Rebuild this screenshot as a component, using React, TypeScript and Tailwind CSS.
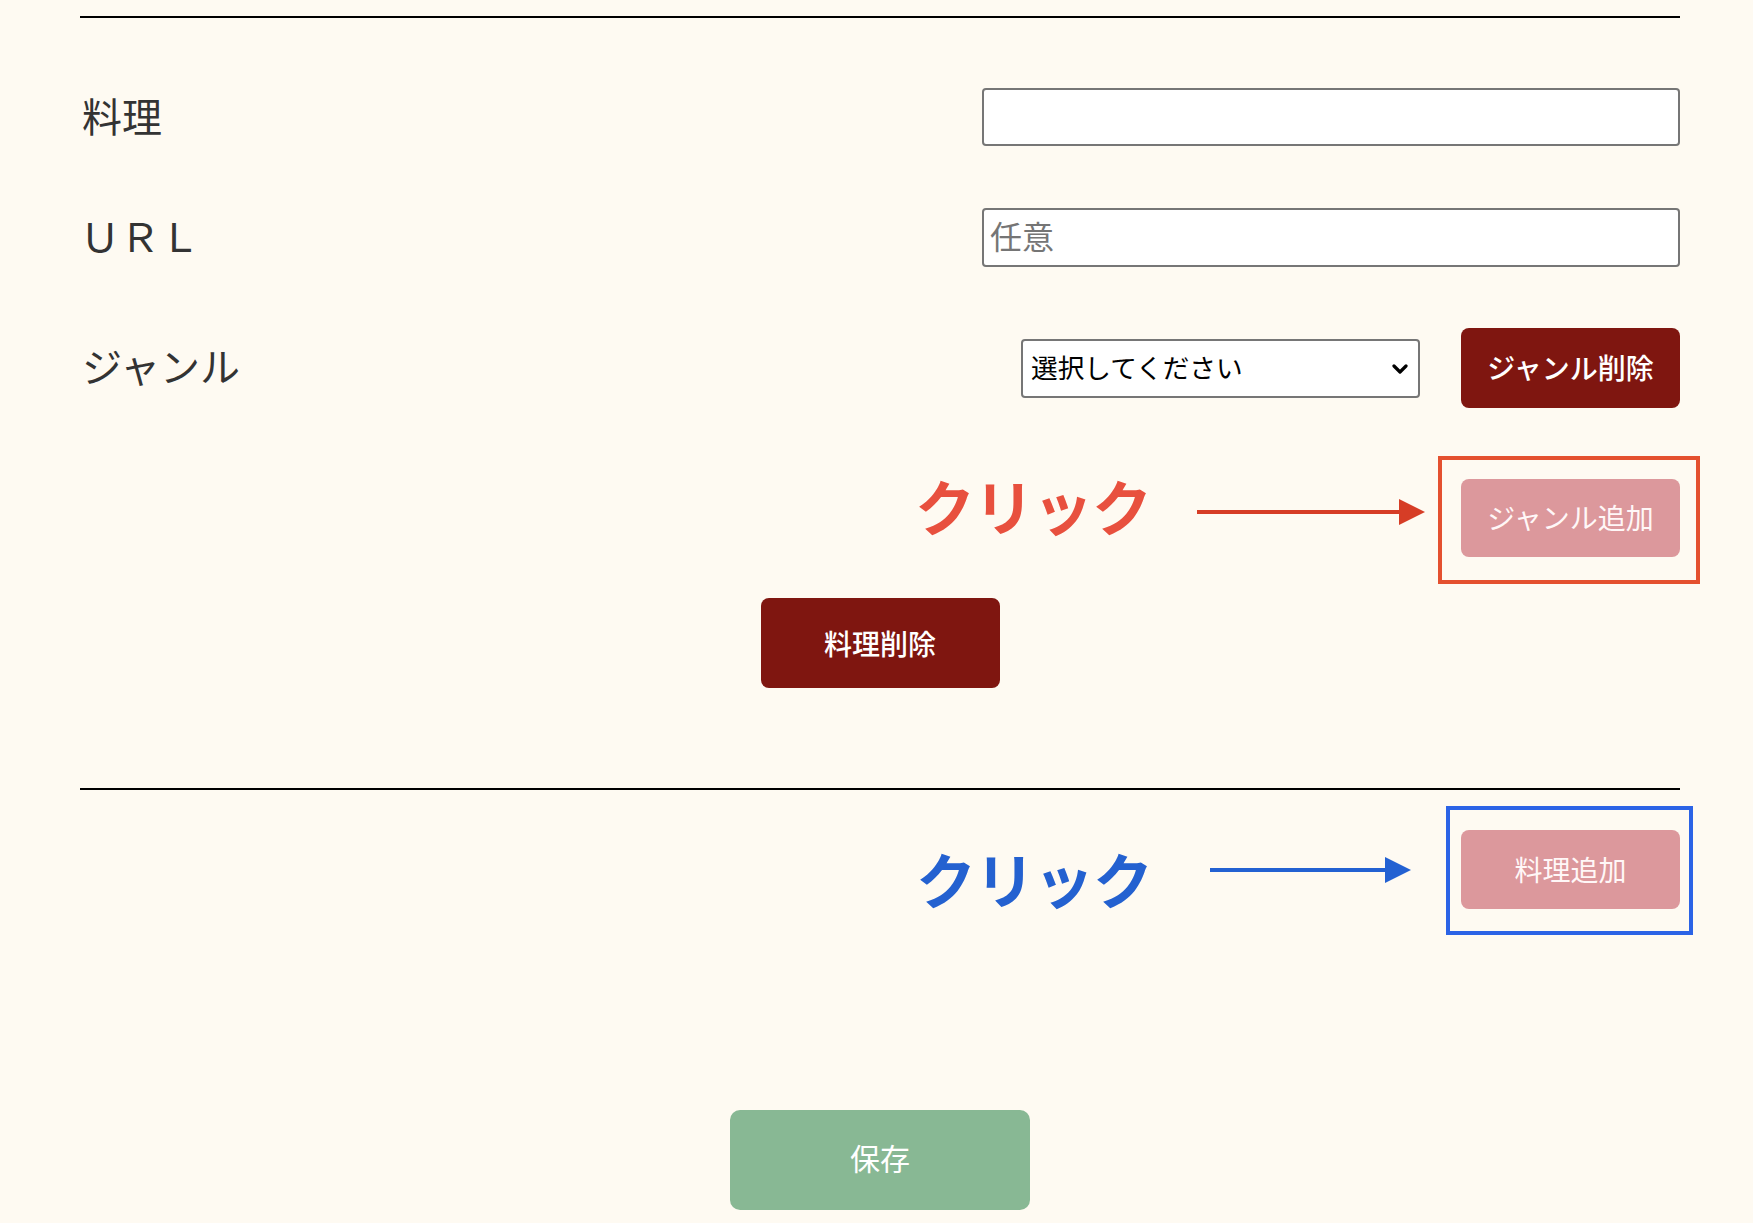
import React from 'react';

const jp = { fontFamily: '"Noto Sans CJK JP", "Noto Sans", sans-serif' };

const Arrow: React.FC<{ color: string; width: number }> = ({ color, width }) => (
    <svg width={width} height={28} viewBox={`0 0 ${width} 28`} className="block">
        <line x1={0} y1={14} x2={width - 24} y2={14} stroke={color} strokeWidth={4} />
        <polygon points={`${width - 26},1 ${width},14 ${width - 26},27`} fill={color} />
    </svg>
);

const App: React.FC = () => {
    return (
        <div className="min-h-[1223px] w-full bg-[#fefaf2] text-[#333333]" style={jp}>
            <div className="ml-[80px] w-[1600px] pt-[16px] pb-[13px] flex flex-col">
                <div className="border-t-2 border-black" />

                {/* 料理 */}
                <div className="mt-[70px] flex items-center justify-between">
                    <span className="text-[40px] leading-none pl-[2px] mb-[5px]">料理</span>
                    <input
                        type="text"
                        className="w-[698px] h-[58px] bg-white border-2 border-[#767676] rounded-[4px] px-[6px] text-[32px] outline-none"
                    />
                </div>

                {/* URL */}
                <div className="mt-[62px] flex items-center justify-between">
                    <span className="text-[40px] leading-none mb-[5px]">ＵＲＬ</span>
                    <input
                        type="text"
                        placeholder="任意"
                        className="w-[698px] h-[59px] bg-white border-2 border-[#767676] rounded-[4px] px-[6px] pb-[5px] text-[32px] outline-none placeholder:text-[#757575]"
                    />
                </div>

                {/* ジャンル */}
                <div className="mt-[61px] flex items-center justify-between">
                    <span className="text-[40px] leading-none pl-[2px] mb-[6px]">ジャンル</span>
                    <div className="flex items-center gap-[41px]">
                        <div className="relative">
                            <select className="appearance-none w-[399px] h-[59px] bg-white border-2 border-[#767676] rounded-[4px] pl-[8px] pb-[3px] text-[26.67px] text-black outline-none">
                                <option>選択してください</option>
                            </select>
                            <svg
                                width={16}
                                height={12}
                                viewBox="0 0 16 12"
                                className="absolute right-[12px] top-[24px] pointer-events-none"
                            >
                                <path d="M2 3 L8 9 L14 3" fill="none" stroke="#000" strokeWidth={3.2} strokeLinecap="round" strokeLinejoin="round" />
                            </svg>
                        </div>
                        <button className="w-[219px] h-[80px] rounded-[8px] bg-[#7f1610] text-white text-[28px] font-medium pb-[2px]">
                            ジャンル削除
                        </button>
                    </div>
                </div>

                {/* ジャンル追加 + annotation */}
                <div className="mt-[71px] flex items-center justify-end">
                    <span className="text-[60px] font-bold leading-none text-[#e8503e] tracking-[-1px] mt-[-4px] mb-[22px]">クリック</span>
                    <div className="ml-[46px] mr-[36px] mb-[12px]">
                        <Arrow color="#d63d26" width={228} />
                    </div>
                    <div className="relative">
                        <button className="w-[219px] h-[78px] rounded-[8px] bg-[#dc989c] text-[#fff7f7] text-[28px] pb-[2px]">
                            ジャンル追加
                        </button>
                        <div className="absolute left-[-23px] right-[-20px] top-[-23px] bottom-[-27px] border-4 border-[#e4502f] pointer-events-none" />
                    </div>
                </div>

                {/* 料理削除 */}
                <div className="mt-[41px] flex justify-center">
                    <button className="w-[239px] h-[90px] rounded-[8px] bg-[#7f1610] text-white text-[28px] font-medium">
                        料理削除
                    </button>
                </div>

                <div className="mt-[100px] border-t-2 border-black" />

                {/* 料理追加 + annotation */}
                <div className="mt-[40px] flex items-center justify-end">
                    <span className="text-[60px] font-bold leading-none text-[#2461d0] tracking-[-1px] mb-[-16px]">クリック</span>
                    <div className="ml-[58px] mr-[50px]">
                        <Arrow color="#2361d2" width={201} />
                    </div>
                    <div className="relative">
                        <button className="w-[219px] h-[79px] rounded-[8px] bg-[#dc989c] text-[#fff7f7] text-[28px] pb-[2px]">
                            料理追加
                        </button>
                        <div className="absolute left-[-15px] right-[-13px] top-[-24px] bottom-[-26px] border-4 border-[#2b63e6] pointer-events-none" />
                    </div>
                </div>

                {/* 保存 */}
                <div className="mt-[201px] flex justify-center">
                    <button className="w-[300px] h-[100px] rounded-[10px] bg-[#88b894] text-white text-[30px] pb-[5px]">
                        保存
                    </button>
                </div>
            </div>
        </div>
    );
};

export default App;
